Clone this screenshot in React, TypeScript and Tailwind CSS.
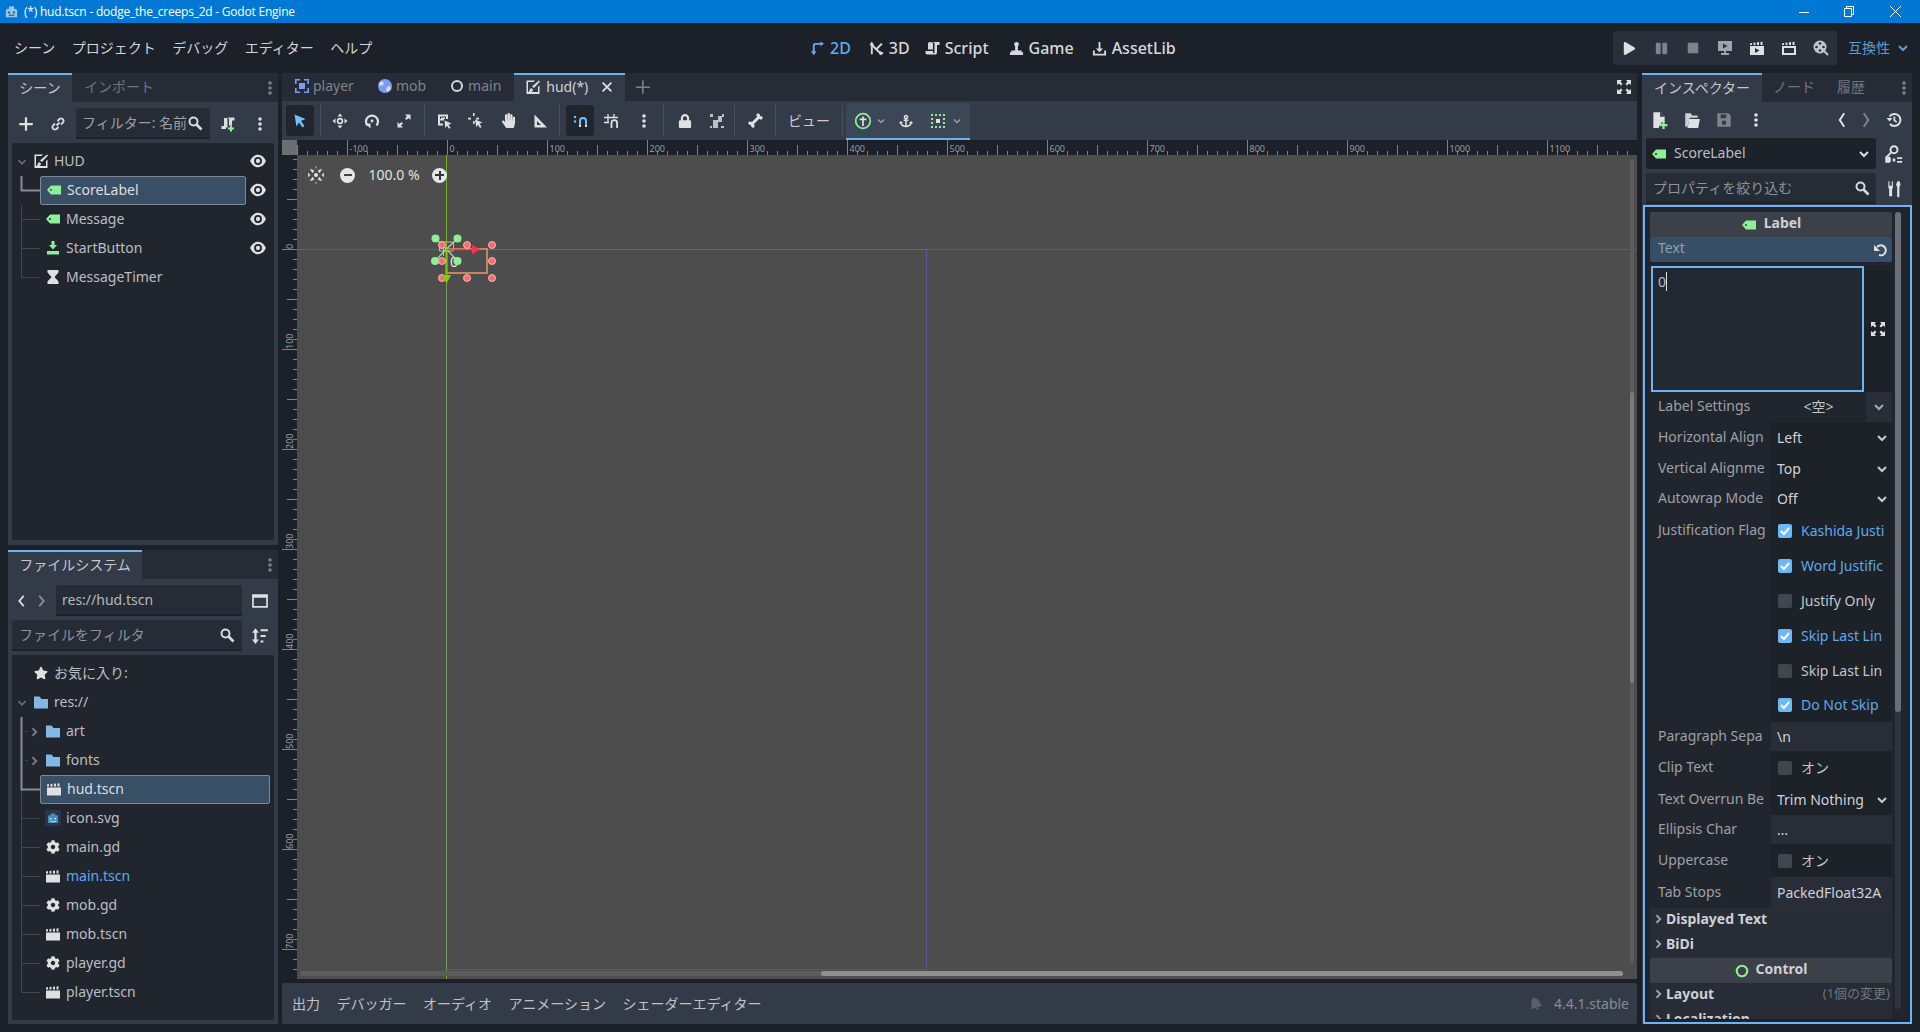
import type { ReactNode } from 'react'
import { FaAnchor, FaBell, FaBone, FaCog, FaHandPaper, FaLock, FaPause, FaPlay, FaStar, FaStop } from 'react-icons/fa'

const font = { fontFamily: '"Noto Sans", "Noto Sans CJK JP", sans-serif' }

const I = ({ children, size = 16, className = '' }: { children: ReactNode; size?: number; className?: string }) => (
  <svg width={size} height={size} viewBox="0 0 16 16" fill="currentColor" className={`shrink-0 ${className}`}>{children}</svg>
)

const Chevron = ({ className = '', size = 16 }: { className?: string; size?: number }) => (
  <I size={size} className={className}><path d="M4 6l4 4 4-4" fill="none" stroke="currentColor" strokeWidth="2" /></I>
)
const ChevronRight = ({ className = '' }: { className?: string }) => (
  <I size={12} className={className}><path d="M6 3l5 5-5 5" fill="none" stroke="currentColor" strokeWidth="2.4" /></I>
)
const Dots = ({ className = '' }: { className?: string }) => (
  <I className={className}><circle cx="8" cy="3" r="1.8" /><circle cx="8" cy="8" r="1.8" /><circle cx="8" cy="13" r="1.8" /></I>
)
const Search = ({ className = 'text-[#d8d9db]' }: { className?: string }) => (
  <I className={className}><circle cx="6.5" cy="6.5" r="4" fill="none" stroke="currentColor" strokeWidth="2" /><path d="M9.5 9.5l5 5" stroke="currentColor" strokeWidth="2.6" /></I>
)
const LabelIcon = () => (
  <I className="text-[#8eef97]"><path fillRule="evenodd" d="M1 8l4-4.500h10v9H5zM5 7a1 1 0 1 0 0 2 1 1 0 0 0 0-2z" /></I>
)
const Eye = () => (
  <I size={18} className="text-[#e0e0e0]"><path fillRule="evenodd" d="M8 2.500C4.500 2.500 2 5.500 1 8c1 2.500 3.500 5.500 7 5.500s6-3 7-5.500c-1-2.500-3.500-5.500-7-5.500zm0 2a3.500 3.500 0 1 1 0 7 3.500 3.500 0 0 1 0-7zm0 1.600a1.900 1.900 0 1 0 0 3.800 1.900 1.900 0 0 0 0-3.800z" /></I>
)
const ControlNode = () => (
  <I className="text-[#e0e0e0]"><path d="M2 1.500h8L8.500 3H3v10h10V8l1.500-1.500V15H1.500V1.500z" /><path d="M14 1.500l1 1-6 6.500-2-1.500zM6 9l2 1.500c0 2.500-2.500 3-4.500 2.500C5 12 4.500 10 6 9z" /></I>
)
const Clapper = () => (
  <I size={16} className="text-[#e0e0e0]"><path d="M1 6.500h14v8H1zM1 3.500l2-.500v2.500H1zM4.500 3l2-.300v2.800h-2zM8 2.700l2-.200v3H8zM11.500 2.500l2-.200v3.200h-2z" /></I>
)
const Folder = () => (
  <I size={16} className="text-[#84b7e3]"><path d="M1 2.500h5.500l2 2.500H15v9.500H1z" /></I>
)
const Gear = () => <FaCog size={14} className="mx-px shrink-0 text-[#e0e0e0]" />
const Scroll = () => (
  <I><path d="M6 2h8.500v3H12v7.500c0 1.500-1 2-2 2H2c-1 0-1.500-.800-1.500-2V11H8v1.500c0 .500.300.800.700.800s.800-.300.800-.800V3.500C9.500 2.800 9 2 6 2z" /><path d="M4.500 2C3.500 2 3 3 3 4v5.500h5V3.500C8 2.800 7 2 4.500 2z" /></I>
)
const ClapPlay = () => (
  <I><path fillRule="evenodd" d="M1 6h14v9H1zM6 8v5l4.500-2.500z" /><path d="M1 3.500l2-.500v2H1zM4.500 2.800l2-.300V5h-2zM8 2.300l2-.200V5H8zM11.500 2l2-.200V5h-2z" /></I>
)
const ClapOpen = () => (
  <I><path fillRule="evenodd" d="M1 6h14v9H1zM3 8v5h10V8z" /><path d="M1 3.500l2-.500v2H1zM4.500 2.800l2-.300V5h-2zM8 2.300l2-.200V5H8zM11.500 2l2-.200V5h-2z" /></I>
)

const Sep = () => <div className="mx-[3px] h-[31px] w-px bg-[#485061]" />

const ToolBtn = ({ children, active = false, w = 32 }: { children: ReactNode; active?: boolean; w?: number }) => (
  <div style={{ width: w }} className={`flex h-[31px] items-center justify-center rounded-[3px] text-[#dfe0e2] ${active ? 'bg-[#21262e]' : ''}`}>{children}</div>
)

const toolbarLeft = (
  <>
    <ToolBtn active w={28}>
      <I className="text-[#70bfff]"><path d="M2.500 1.500l11 4.500-4.500 2 3.500 5-2 1.500-3.500-5-2.500 4z" /></I>
    </ToolBtn>
    <div className="w-[3px]" /><Sep />
    <ToolBtn>
      <I><path d="M8 .500l2.500 3h-5zM8 15.500l-2.500-3h5zM.500 8l3-2.500v5zM15.500 8l-3 2.500v-5z" /><circle cx="8" cy="8" r="2.400" fill="none" stroke="currentColor" strokeWidth="1.600" /></I>
    </ToolBtn>
    <ToolBtn>
      <I><path d="M3.500 12.500A6 6 0 1 1 12.500 12.500" fill="none" stroke="currentColor" strokeWidth="2.200" /><path d="M1 10.500h5.500v5z" /><circle cx="8" cy="8" r="1.400" /></I>
    </ToolBtn>
    <ToolBtn>
      <I><path d="M9 1.500h5.500V7l-2-2-2 2L9 5.500l2-2zM7 14.500H1.500V9l2 2 2-2L7 10.500l-2 2z" /></I>
    </ToolBtn>
    <div className="w-[1px]" /><Sep />
    <ToolBtn>
      <I><path d="M2 1.500h10v4.500h-2V3.500H4V6h4v1.500H4v3h3V12.500H2zM5 4.500h4V6H5z" /><path d="M8.500 7.500l7 3-3 1.200 2 3-1.500 1-2-3-1.700 2.300z" /></I>
    </ToolBtn>
    <ToolBtn>
      <I><path d="M5 0h1.600v3H5zM5 8h1.600v3H5zM0 4.800h3v1.600H0zM8 4.800h3v1.600H8z" /><path d="M7 6.500l7.500 3-3 1.200 2 3.300-1.500 1-2-3.300-1.700 2.500z" /></I>
    </ToolBtn>
    <ToolBtn><FaHandPaper size={15} /></ToolBtn>
    <ToolBtn>
      <I><path fillRule="evenodd" d="M2.500 1.500L15 14.500H2.500zM5 8v4h4z" /></I>
    </ToolBtn>
    <Sep />
    <div className="w-[3px]" />
    <ToolBtn active w={28}>
      <I><path d="M8 14V8a3 3 0 0 1 6 0v6" fill="none" stroke="#70bfff" strokeWidth="2" /><path d="M7 12h2v2H7zM13 12h2v2h-2z" fill="#e0e0e0" /><circle cx="3" cy="4" r="1.200" fill="#70bfff" /><circle cx="3" cy="8.500" r="1.200" fill="#70bfff" /></I>
    </ToolBtn>
    <ToolBtn w={33}>
      <I><path d="M5 1v9M11 1v4M1 4.500h14M1 9.500h5" fill="none" stroke="currentColor" strokeWidth="1.300" /><path d="M8.500 15V10a2.800 2.800 0 0 1 5.600 0v5" fill="none" stroke="currentColor" strokeWidth="1.800" /></I>
    </ToolBtn>
    <ToolBtn w={33}><Dots /></ToolBtn>
    <Sep />
    <ToolBtn w={36}><FaLock size={14} /></ToolBtn>
    <ToolBtn w={28}>
      <I><path d="M1 1h3v3H1zM12 13h3v2h-3zM1 13h2v2H1zM13 1h2v3h-2zM4 7h5v8H4zM9 3h4v6H9z" opacity=".8" /></I>
    </ToolBtn>
    <Sep />
    <ToolBtn w={34}><FaBone size={15} className="-rotate-45" /></ToolBtn>
    <Sep />
    <div className="flex h-[31px] w-[60px] items-center justify-center text-sm text-[#c9cbcf]">ビュー</div>
    <Sep />
  </>
)

type TreeItem = { name: string; icon: ReactNode; eye?: boolean; selected?: boolean; level: number; open?: boolean; closed?: boolean; blue?: boolean }

const TreeRow = ({ item, boxRight }: { item: TreeItem; boxRight: boolean }) => {
  const text = item.blue ? 'text-[#5fa9e8]' : item.selected ? 'text-[#dcdee0]' : 'text-[#bcbec2]'
  return (
    <div className="flex h-[29px] items-center">
      {item.level === 0 ? (
        <div className="flex w-[21px] justify-end pr-[4px]">{item.open && <Chevron size={14} className="text-[#6c7078]" />}</div>
      ) : (
        <div className="flex w-[28px] justify-end">{item.closed && <ChevronRight className="text-[#7a7e85]" />}</div>
      )}
      <div className={`flex h-[29px] flex-1 items-center rounded-[2px] pb-[2px] ${item.level === 1 ? 'pl-[5px]' : ''} ${item.selected ? 'border border-[#7d8894] bg-[#384f66] pl-[4px]' : ''}`}>
        <div className="mr-[5px] flex w-[16px] justify-center">{item.icon}</div>
        <span className={`text-sm ${text}`}>{item.name}</span>
      </div>
      {boxRight && <div className="flex w-[28px] justify-start pb-[2px] pl-[3px]">{item.eye && <Eye />}</div>}
      {!boxRight && <div className="w-[4px]" />}
    </div>
  )
}

const sceneItems: TreeItem[] = [
  { name: 'HUD', level: 0, open: true, icon: <ControlNode />, eye: true },
  { name: 'ScoreLabel', level: 1, selected: true, icon: <LabelIcon />, eye: true },
  { name: 'Message', level: 1, icon: <LabelIcon />, eye: true },
  { name: 'StartButton', level: 1, eye: true, icon: <I className="text-[#8eef97]"><path d="M6.500 1h3v4H12L8 9.500 4 5h2.500zM2 11h12v3.500H2z" /></I> },
  { name: 'MessageTimer', level: 1, icon: <I className="text-[#e0e0e0]"><path d="M2.500 1h11v2.500L9.500 8l4 4.500V15h-11v-2.500l4-4.500-4-4.500z" /></I> },
]

const fileItems: TreeItem[] = [
  { name: 'お気に入り:', level: 0, icon: <FaStar size={14} className="text-[#e0e0e0]" /> },
  { name: 'res://', level: 0, open: true, icon: <Folder /> },
  { name: 'art', level: 1, closed: true, icon: <Folder /> },
  { name: 'fonts', level: 1, closed: true, icon: <Folder /> },
  { name: 'hud.tscn', level: 1, selected: true, icon: <Clapper /> },
  { name: 'icon.svg', level: 1, icon: (
    <I className="text-[#478cbf]"><rect width="16" height="16" rx="1.500" fill="#2c3448" /><path d="M3 6l1.500-1 1 .500L6 3.500h4l.500 2 1-.500L13 6v7H3z" /><path d="M5 8h1.500v1.500H5zM9.500 8H11v1.500H9.500zM5 11h6v.800H5z" fill="#e0e0e0" /></I>
  ) },
  { name: 'main.gd', level: 1, icon: <Gear /> },
  { name: 'main.tscn', level: 1, blue: true, icon: <Clapper /> },
  { name: 'mob.gd', level: 1, icon: <Gear /> },
  { name: 'mob.tscn', level: 1, icon: <Clapper /> },
  { name: 'player.gd', level: 1, icon: <Gear /> },
  { name: 'player.tscn', level: 1, icon: <Clapper /> },
]

const DockTabs = ({ active, others, w }: { active: string; others: { t: string; ml: number }[]; w: number }) => (
  <div className="flex h-[29px] items-stretch bg-[#262c36]">
    <div style={{ width: w }} className="flex items-center justify-center border-t-2 border-[#6cb2ef] bg-[#343b48] pb-[2px] text-sm text-[#c4c6ca]">{active}</div>
    {others.map(o => <span key={o.t} style={{ marginLeft: o.ml }} className="self-center pb-[2px] text-sm text-[#6f7580]">{o.t}</span>)}
    <div className="flex-1" />
    <div className="flex w-[16px] items-center justify-center"><Dots className="text-[#7b808a]" /></div>
  </div>
)

const Input = ({ children, className = '' }: { children: ReactNode; className?: string }) => (
  <div className={`flex h-[31px] items-center rounded-t-[3px] border-b-2 border-[#1d2129] bg-[#262c36] ${className}`}>{children}</div>
)

const SceneDock = () => (
  <div className="flex h-[472px] flex-col bg-[#343b48]">
    <DockTabs active="シーン" w={64} others={[{ t: 'インポート', ml: 12 }]} />
    <div className="flex h-[31px] mt-[6px] items-center">
      <div className="flex w-[36px] justify-center text-[#e0e0e0]"><I size={18}><path d="M7 2h2v5h5v2H9v5H7V9H2V7h5z" /></I></div>
      <div className="flex w-[32px] justify-center pr-[4px] text-[#dcdcdc]">
        <I><path d="M6.500 9.500l3-3M5 7.500L3 9.500a2.500 2.500 0 0 0 3.500 3.500l2-2M11 8.500l2-2A2.500 2.500 0 0 0 9.500 3l-2 2" fill="none" stroke="currentColor" strokeWidth="1.800" /></I>
      </div>
      <Input className="w-[134px] overflow-hidden pl-[6px]">
        <span className="w-[105px] shrink-0 overflow-hidden whitespace-nowrap text-sm text-[#9b9fa6]">フィルター: 名前</span>
        <Search />
      </Input>
      <div className="flex w-[36px] justify-center text-[#dcdcdc]"><I><path d="M6 1.500h8.500v3H12v5H9V3C9 2 8 1.500 6 1.500z" /><path d="M4 2h3.500v9.500H6V13h-4.500V10H4z" /><path d="M10 9.500h2v2h2v2h-2v2h-2v-2H8v-2h2z" fill="#8eef97" /></I></div>
      <div className="flex w-[28px] justify-center text-[#dcdcdc]"><Dots /></div>
    </div>
    <div className="relative mx-[4px] mb-[5px] mt-[4px] flex-1 rounded-[2px] bg-[#21262e] pt-[4px]">
      <svg className="absolute left-0 top-0" width="40" height="140" fill="none">
        <path d="M9.500 62V134.500H28M9.500 105.500H28M9.500 76.500H28" stroke="#41464f" />
        <path d="M9.500 33V47.500H28" stroke="#8a8c90" strokeWidth="2" />
      </svg>
      <div className="relative">{sceneItems.map(i => <TreeRow key={i.name} item={i} boxRight />)}</div>
    </div>
  </div>
)

const FileDock = () => (
  <div className="flex h-[474px] flex-col bg-[#343b48]">
    <DockTabs active="ファイルシステム" w={134} others={[]} />
    <div className="mt-[6px] flex h-[31px] items-center">
      <div className="flex w-[48px] items-center justify-between pl-[10px] pr-[11px]">
        <span className="h-[14px] w-[8px] text-[#dcdcdc]"><I size={14} className="-ml-[3px]"><path d="M10 2L5 8l5 6" fill="none" stroke="currentColor" strokeWidth="2.200" /></I></span>
        <span className="h-[14px] w-[8px] text-[#8a8f98]"><I size={14} className="-ml-[3px]"><path d="M6 2l5 6-5 6" fill="none" stroke="currentColor" strokeWidth="2.200" /></I></span>
      </div>
      <Input className="w-[186px] pl-[6px]"><span className="text-sm text-[#b4b7bb]">res://hud.tscn</span></Input>
      <div className="flex w-[36px] justify-center text-[#e0e0e0]"><I size={18}><path fillRule="evenodd" d="M1 2h14v12H1zM2.500 5v7.500h11V5z" /></I></div>
    </div>
    <div className="mt-[4px] flex h-[31px] items-center pl-[4px]">
      <Input className="w-[230px] justify-between pl-[7px] pr-[7px]">
        <span className="text-sm text-[#8d9198]">ファイルをフィルタ</span>
        <Search />
      </Input>
      <div className="flex w-[36px] justify-center text-[#e0e0e0]"><I size={18}><path d="M4 1l3 4H5v6h2l-3 4-3-4h2V5H1zM8.500 2H15v1.800H8.500zM8.500 7H13v1.800H8.500zM8.500 12H11v1.800H8.500z" /></I></div>
    </div>
    <div className="relative mx-[4px] mb-[4px] mt-[4px] h-[365px] rounded-[2px] bg-[#21262e] pt-[4px]">
      <svg className="absolute left-0 top-0" width="40" height="340" fill="none">
        <path d="M9.500 135V337.500H28M9.500 163.500H28M9.500 192.500H28M9.500 221.500H28M9.500 250.500H28M9.500 279.500H28M9.500 308.500H28" stroke="#41464f" />
        <path d="M13 76.500H16M13 105.500H16" stroke="#41464f" />
        <path d="M9.500 62V134.500H28" stroke="#8a8c90" strokeWidth="2" />
      </svg>
      <div className="relative">{fileItems.map(i => <TreeRow key={i.name} item={i} boxRight={false} />)}</div>
    </div>
  </div>
)

const SceneTab = ({ name, icon, ml }: { name: string; icon: ReactNode; ml: number }) => (
  <div style={{ marginLeft: ml }} className="flex items-center gap-[3px] pb-[2px] text-sm text-[#7e838c]">{icon}<span>{name}</span></div>
)

const hMajors = [-100, 0, 100, 200, 300, 400, 500, 600, 700, 800, 900, 1000, 1100]
const hTicks = Array.from({ length: 135 }, (_, i) => i)
const vTicks = Array.from({ length: 83 }, (_, i) => i)

const HRuler = () => (
  <svg width="1340" height="15" className="block bg-[#1c2028]">
    {hTicks.map(i => {
      const x = 0.5 + i * 10 - 0
      const v = i * 10 - 150
      const h = v % 100 === 0 ? 15 : v % 50 === 0 ? 10 : 4
      return <line key={i} x1={x} x2={x} y1={15 - h} y2={15} stroke="#7e8187" />
    })}
    {hMajors.map(v => (
      <text key={v} x={v + 150 + 2.5} y={12} fontSize="9" fill="#9a9da2" style={font}>{v}</text>
    ))}
  </svg>
)

const VRuler = () => (
  <svg width="15" height="824" className="block bg-[#1c2028]">
    {vTicks.map(i => {
      const y = 4.5 + i * 10
      const v = i * 10 - 90
      const w = v % 100 === 0 ? 15 : v % 50 === 0 ? 10 : 4
      return <line key={i} x1={15 - w} x2={15} y1={y} y2={y} stroke="#7e8187" />
    })}
    {[0, 100, 200, 300, 400, 500, 600, 700].map(v => (
      <text key={v} transform={`translate(11 ${94 + v}) rotate(-90)`} fontSize="9" fill="#9a9da2" style={font}>{v}</text>
    ))}
  </svg>
)

const Gizmo = () => (
  <svg width="1340" height="824" className="absolute left-0 top-0">
    <g transform="translate(149.500 94)">
      <line x1="-150" x2="0" y1="0.500" y2="0.500" stroke="#a8404f" />
      <line x1="0" x2="480" y1="0.500" y2="0.500" stroke="#8d4b93" />
      <line x1="480" x2="1200" y1="0.500" y2="0.500" stroke="#a8404f" />
      <line x1="0" x2="0" y1="-94" y2="0" stroke="#74b01f" />
      <line x1="0" x2="0" y1="0" y2="720" stroke="#7a9a68" />
      <line x1="0" x2="0" y1="720" y2="730" stroke="#74b01f" />
      <line x1="480" x2="480" y1="0" y2="720" stroke="#5a5a96" />
      <line x1="0" x2="480" y1="720.500" y2="720.500" stroke="#5a4fa6" />
      <rect x="0" y="0" width="40.500" height="24" fill="none" stroke="#c58658" strokeWidth="2" />
      <text x="3.500" y="17.500" fontSize="14" fill="#e8e8e8" style={font}>0</text>
      <path d="M-7 -7h14v9h-14zM-3 -7v14" fill="none" stroke="#e8a0a8" strokeWidth="1" />
      {[[-11, -10.500], [11, -10.500], [-11.500, 12], [11, 12]].map(([x, y], i) => (
        <g key={i}>
          <line x1="0" y1="0" x2={x} y2={y} stroke="#8eef97" strokeWidth="1.300" />
          <circle cx={x} cy={y} r="4" fill="#8eef97" />
        </g>
      ))}
      <line x1="0" x2="0" y1="0" y2="27" stroke="#80c800" strokeWidth="1.500" />
      <line x1="0" x2="27" y1="0.500" y2="0.500" stroke="#ff3a58" strokeWidth="1.500" />
      {[[-4.500, -4], [20.500, -4], [45.500, -4], [-4.500, 12], [45.500, 12], [-4.500, 29], [20.500, 29], [45.500, 29]].map(([x, y], i) => (
        <circle key={i} cx={x} cy={y} r="3.500" fill="#ff6b6b" stroke="#f0d0d0" strokeWidth="0.800" />
      ))}
      <path d="M25.500 -4V5L34 0.500z" fill="#ff3050" />
      <path d="M-4.500 26H4.500L0 34.500z" fill="#7ed100" />
    </g>
  </svg>
)

const Viewport = () => (
  <div className="flex h-[839px] flex-col">
    <div className="flex h-[15px]">
      <div className="h-[15px] w-[15px] bg-[#6d6e70]" />
      <HRuler />
    </div>
    <div className="flex h-[824px]">
      <VRuler />
      <div className="relative w-[1340px] overflow-hidden bg-[#4d4d4d]">
        <Gizmo />
        <div className="absolute left-[10px] top-[10px] flex h-[20px] items-center text-[#e6e6e6]">
          <I size={18}><path d="M3 3l3 1-1 2zM13 3l-3 1 1 2zM3 13l3-1-1-2zM13 13l-3-1 1-2zM8 0v2M8 14v2" stroke="currentColor" fill="currentColor" strokeWidth=".600" /><circle cx="8" cy="8" r="1.800" /><path d="M1 6l2 2-2 2zM15 6l-2 2 2 2z" /></I>
          <div className="ml-[15px] flex h-[15px] w-[15px] items-center justify-center rounded-full bg-[#e6e6e6]"><div className="h-[2px] w-[8px] bg-[#444]" /></div>
          <span className="ml-[10px] w-[58px] text-center text-sm text-[#e2e2e2]">100.0 %</span>
          <div className="relative ml-[9px] flex h-[15px] w-[15px] items-center justify-center rounded-full bg-[#e6e6e6]"><div className="h-[2px] w-[9px] bg-[#333]" /><div className="absolute h-[9px] w-[2px] bg-[#333]" /></div>
        </div>
        <div className="absolute bottom-[3px] left-[3px] h-[5px] w-[1323px] rounded-full bg-[#5c5c5c]" />
        <div className="absolute bottom-[3px] left-[524px] h-[5px] w-[802px] rounded-full bg-[#8f8f8f]" />
        <div className="absolute right-[3px] top-[4px] h-[804px] w-[4px] rounded-full bg-[#5c5c5c]" />
        <div className="absolute right-[3px] top-[237px] h-[291px] w-[4px] rounded-full bg-[#7a7a7a]" />
      </div>
    </div>
  </div>
)

const CenterColumn = () => (
  <div className="flex w-[1355px] flex-col">
    <div className="flex h-[28px] items-stretch bg-[#262c36]">
      <SceneTab name="player" ml={12} icon={<I className="text-[#7c9cf0]"><path d="M1 1h5v1.600H2.600V6H1zM10 1h5v5h-1.600V2.600H10zM1 10h1.600v3.400H6V15H1zM13.400 10H15v5h-5v-1.600h3.400zM5 5h6v6H5z" /></I>} />
      <SceneTab name="mob" ml={23} icon={<I className="text-[#7c9cf0]"><circle cx="8" cy="8" r="7" /><path d="M4 3l3 2-1 2-3 1-1-2zM10 9l3-1 1 3-3 3-2-2z" fill="#d9dce6" /></I>} />
      <SceneTab name="main" ml={23} icon={<I className="text-[#d4d5d7]"><circle cx="8" cy="8" r="5" fill="none" stroke="currentColor" strokeWidth="2" /></I>} />
      <div className="ml-[13px] flex w-[111px] items-center border-t-2 border-[#6cb2ef] bg-[#343b48] pb-[2px] pl-[11px] text-sm text-[#cfd1d4]">
        <ControlNode />
        <span className="ml-[5px]">hud(*)</span>
        <I size={14} className="ml-[12px] text-[#e0e0e0]"><path d="M3 3l10 10M13 3L3 13" stroke="currentColor" strokeWidth="2" /></I>
      </div>
      <div className="ml-[8px] flex items-center text-[#7c828c]"><I size={18}><path d="M8 2h1.400v5.500H15v1.400H9.400V14H8V8.900H2.500V7.500H8z" /></I></div>
      <div className="flex-1" />
      <div className="flex w-[21px] items-center text-[#e0e0e0]"><I><path d="M1 1h5L4.500 2.800 6.500 5 5 6.500 2.800 4.500 1 6zM15 1v5l-1.800-1.500L11 6.500 9.500 5l2-2.200L10 1zM1 15v-5l1.800 1.500L5 9.500 6.500 11l-2 2.200L6 15zM15 15h-5l1.500-1.800L9.500 11 11 9.500l2.200 2L15 10z" /></I></div>
    </div>
    <div className="flex h-[39px] items-center bg-[#343b48] pl-[4px]">
      {toolbarLeft}
      <div className="flex h-[37px] w-[124px] items-center self-end border-b-2 border-[#6cb2ef] bg-[#3b4757] pl-[8px] text-[#dfe0e2]">
        <I size={18} className="text-[#8eef97]"><circle cx="8" cy="8" r="6.500" fill="none" stroke="currentColor" strokeWidth="1.500" /><path d="M5 6.500h6M8 4v8.500" stroke="#e0e0e0" strokeWidth="1.500" /></I>
        <Chevron size={12} className="ml-[3px] text-[#9a9ea5]" />
        <FaAnchor size={14} className="ml-[12px]" />
        <I size={16} className="ml-[17px] text-[#8eef97]"><path d="M1 1h2v2H1zM5 1h2v2H5zM9 1h2v2H9zM13 1h2v2h-2zM1 5h2v2H1zM13 5h2v2h-2zM1 9h2v2H1zM13 9h2v2h-2zM1 13h2v2H1zM5 13h2v2H5zM9 13h2v2H9zM13 13h2v2h-2z" /><path d="M6 6h4v4H6z" fill="#e0e0e0" /></I>
        <Chevron size={12} className="ml-[5px] text-[#9a9ea5]" />
      </div>
    </div>
    <Viewport />
    <div className="mt-[4px] flex h-[41px] items-center rounded-[2px] bg-[#343b48] pl-[10px] pr-[8px] text-sm text-[#c0c2c6]">
      <span>出力</span>
      <span className="ml-[16.500px]">デバッガー</span>
      <span className="ml-[16.500px]">オーディオ</span>
      <span className="ml-[16.500px]">アニメーション</span>
      <span className="ml-[16.500px]">シェーダーエディター</span>
      <div className="flex-1" />
      <FaBell size={13} className="-rotate-[20deg] text-[#5a606b]" />
      <span className="ml-[12px] text-[#878b92]">4.4.1.stable</span>
    </div>
  </div>
)

const InspLabel = ({ children }: { children: ReactNode }) => (
  <div className="w-[121px] overflow-hidden whitespace-nowrap pb-[2px] pl-[8px] text-sm text-[#9da0a6]">{children}</div>
)

const SelectRow = ({ label, value, h = 31 }: { label: string; value: string; h?: number }) => (
  <div style={{ height: h }} className="flex shrink-0 items-center">
    <InspLabel>{label}</InspLabel>
    <div className="flex h-full w-[121px] items-center justify-between bg-[#1d2128] pl-[6px] pr-[2px] text-sm text-[#d0d2d5]">{value}<Chevron className="text-[#c9cbcf]" /></div>
  </div>
)

const TextRow = ({ label, value, h, dark = false }: { label: string; value: string; h: number; dark?: boolean }) => (
  <div style={{ height: h }} className="flex shrink-0 items-center">
    <InspLabel>{label}</InspLabel>
    <div className={`flex h-full w-[121px] items-center overflow-hidden whitespace-nowrap pl-[6px] text-sm text-[#d0d2d5] ${dark ? 'bg-[#21262e]' : 'bg-[#282d37]'}`}>{value}</div>
  </div>
)

const Box = ({ on }: { on: boolean }) => (
  <div className={`flex h-[14px] w-[14px] shrink-0 items-center justify-center rounded-[2px] ${on ? 'bg-[#6cb8f8]' : 'bg-[#41454f]'}`}>
    {on && <I size={12} className="text-white"><path d="M2.500 8l4 4 7-8" fill="none" stroke="currentColor" strokeWidth="2.600" /></I>}
  </div>
)

const CheckRow = ({ label, on, text, h }: { label?: string; on: boolean; text: string; h: number }) => (
  <div style={{ height: h }} className="flex shrink-0 items-center">
    <InspLabel>{label ?? ''}</InspLabel>
    <div className="flex h-full w-[121px] items-center gap-[9px] overflow-hidden whitespace-nowrap bg-[#1d2128] pl-[7px]">
      <Box on={on} />
      <span className={`text-sm ${on ? 'text-[#5fa9e8]' : 'text-[#c4c6ca]'}`}>{text}</span>
    </div>
  </div>
)

const SectionRow = ({ name, note }: { name: string; note?: string }) => (
  <div className="flex h-[25px] shrink-0 items-center bg-[#272c36] pb-[3px] pl-[2px] pr-[2px]">
    <ChevronRight className="text-[#a2a5aa]" />
    <span className="ml-[2px] text-sm font-bold text-[#cfd1d4]">{name}</span>
    {note && <span className="ml-auto text-[13px] text-[#6f747d]">{note}</span>}
  </div>
)

const Category = ({ name, icon }: { name: string; icon: ReactNode }) => (
  <div className="flex h-[25px] shrink-0 items-center justify-center gap-[7px] rounded-[2px] bg-[#3c4049] pb-[3px] text-sm font-bold text-[#cfd1d4]">{icon}<span>{name}</span></div>
)

const Inspector = () => (
  <div className="flex w-[270px] flex-col bg-[#343b48]">
    <DockTabs active="インスペクター" w={120} others={[{ t: 'ノード', ml: 11 }, { t: '履歴', ml: 22 }]} />
    <div className="flex h-[36px] items-center text-[#dfe0e2]">
      <div className="flex w-[34px] justify-center"><I size={18}><path d="M3 1h6l4 4v5h-3v3H8v2H3z" /><path d="M9 1v4h4z" fill="#343b48" /><path d="M11 9h2v2.500h2.500v2H13V16h-2v-2.500H8.500v-2H11z" fill="#8eef97" /></I></div>
      <div className="flex w-[32px] justify-center"><I size={18}><path d="M2 2h5l1 2h5v2H6L4 14H2z" opacity=".9" /><path d="M5.500 7H15l-1.500 8H4z" /></I></div>
      <div className="flex w-[32px] justify-center text-[#7d828b]"><I size={18}><path fillRule="evenodd" d="M2 2h10l2 2v10H2zM5 3v3.500h5V3zM8 8.500a2 2 0 1 0 0 4 2 2 0 0 0 0-4z" /></I></div>
      <div className="flex w-[32px] justify-center"><Dots /></div>
      <div className="flex-1" />
      <div className="flex w-[24px] justify-center"><I size={18}><path d="M10 2L6 8l4 6" fill="none" stroke="currentColor" strokeWidth="1.800" /></I></div>
      <div className="flex w-[24px] justify-center text-[#7d828b]"><I size={18}><path d="M6 2l4 6-4 6" fill="none" stroke="currentColor" strokeWidth="1.800" /></I></div>
      <div className="flex w-[34px] justify-center pr-[2px]"><I><path d="M3.500 4.500A6 6 0 1 1 4 12" fill="none" stroke="currentColor" strokeWidth="2" /><path d="M.500 6h6l-3 3.500zM7.500 4.500h1.700V8l2 1.500-1 1.300L7.500 8.800z" /></I></div>
    </div>
    <div className="flex items-center pl-[4px]">
      <div className="flex h-[31px] w-[230px] items-center rounded-[3px] bg-[#1d2129] pl-[5px] pr-[4px] text-sm text-[#bcbec2]">
        <LabelIcon />
        <span className="ml-[7px] pb-[2px]">ScoreLabel</span>
        <Chevron className="ml-auto text-[#dcdcdc]" />
      </div>
      <div className="flex w-[36px] justify-center text-[#dfe0e2]"><I size={20}><circle cx="8" cy="4.500" r="2.800" fill="none" stroke="currentColor" strokeWidth="1.600" /><path d="M6 6.500L2 10.500" stroke="currentColor" strokeWidth="1.600" /><path d="M1 10h3c1 0 1.500 1 1.500 2.500S5 15 4 15H1zM7 11.500h2v2.500H7zM10.500 10.500h4v1.500h-4zM10.500 13.500h4V15h-4z" /></I></div>
    </div>
    <div className="mt-[4px] flex items-center pl-[4px]">
      <Input className="w-[230px] justify-between pl-[7px] pr-[6px]">
        <span className="text-sm text-[#8d9198]">プロパティを絞り込む</span>
        <Search />
      </Input>
      <div className="flex w-[36px] justify-center text-[#dfe0e2]"><I size={18}><path d="M3 1h1v4H3zM6 1h1v4H6zM3 5h4v2l-.700 1v6.500H3.700V8L3 7zM11 1h2l.800 3.500-1 1.500v8.500a1 1 0 0 1-2 0V6l-1-1.500z" /></I></div>
    </div>
    <div className="ml-px mt-[1px] h-[819px] w-[269px] overflow-hidden border-2 border-[#6cb4f5] bg-[#1d2129] pl-px pr-[2px] pt-[1px]">
      <div className="flex h-[811px] overflow-hidden rounded-[2px] bg-[#21262e] pl-[4px] pt-[4px]">
        <div className="flex h-[840px] w-[242px] shrink-0 flex-col">
          <Category name="Label" icon={<span className="pt-[3px]"><LabelIcon /></span>} />
          <div className="flex h-[25px] shrink-0 items-center justify-between rounded-[2px] bg-[#364e66] pb-[3px] pl-[8px] pr-[3px] text-sm text-[#90a0b0]">
            Text
            <I className="mt-[3px] text-[#e0e0e0]"><path d="M4 5A5 5 0 1 1 6 13" fill="none" stroke="currentColor" strokeWidth="2" /><path d="M1 3v6h6z" /></I>
          </div>
          <div className="mt-[4px] flex h-[126px] shrink-0">
            <div className="ml-px w-[213px] border-2 border-[#6cb4f5] bg-[#222831] pl-[5px] pt-[4px] text-sm text-[#bcbec2]">
              <span className="border-r border-[#e0e0e0]">0</span>
            </div>
            <div className="flex w-[28px] items-center justify-center bg-[#1d2128] text-[#e0e0e0]">
              <I><path d="M1 1h5L4.500 2.800 6.500 5 5 6.500 2.800 4.500 1 6zM15 1v5l-1.800-1.500L11 6.500 9.500 5l2-2.200L10 1zM1 15v-5l1.800 1.500L5 9.500 6.500 11l-2 2.200L6 15zM15 15h-5l1.500-1.800L9.500 11 11 9.500l2.200 2L15 10z" /></I>
            </div>
          </div>
          <div className="flex h-[30px] shrink-0 items-center">
            <InspLabel>Label Settings</InspLabel>
            <div className="flex h-full w-[95px] items-center justify-center text-sm text-[#c4c6ca]">&lt;空&gt;</div>
            <div className="flex h-full w-[26px] items-center justify-center bg-[#282d37] text-[#a8abb0]"><Chevron /></div>
          </div>
          <SelectRow label="Horizontal Align" value="Left" />
          <SelectRow label="Vertical Alignme" value="Top" />
          <SelectRow label="Autowrap Mode" value="Off" h={29} />
          <CheckRow label="Justification Flag" on text="Kashida Justi" h={35} />
          <CheckRow on text="Word Justific" h={35} />
          <CheckRow on={false} text="Justify Only" h={35} />
          <CheckRow on text="Skip Last Lin" h={35} />
          <CheckRow on={false} text="Skip Last Lin" h={35} />
          <CheckRow on text="Do Not Skip" h={34} />
          <TextRow label="Paragraph Sepa" value="\n" h={29} />
          <CheckRow label="Clip Text" on={false} text="オン" h={33} />
          <SelectRow label="Text Overrun Be" value="Trim Nothing" />
          <TextRow label="Ellipsis Char" value="…" h={29} />
          <CheckRow label="Uppercase" on={false} text="オン" h={33} />
          <TextRow label="Tab Stops" value="PackedFloat32A" h={31} />
          <SectionRow name="Displayed Text" />
          <SectionRow name="BiDi" />
          <Category name="Control" icon={<span className="pt-[3px] text-[#8eef97]"><I size={14}><circle cx="8" cy="8" r="6" fill="none" stroke="currentColor" strokeWidth="2.400" /></I></span>} />
          <SectionRow name="Layout" note="(1個の変更)" />
          <SectionRow name="Localization" />
        </div>
        <div className="relative ml-[3px] h-[797px] w-[6px] shrink-0 rounded-full bg-[#2f343e]">
          <div className="h-[500px] w-[6px] rounded-full bg-[#6c6f76]" />
        </div>
      </div>
    </div>
  </div>
)

export default function App() {
  return (
    <div style={font} className="flex h-[1032px] w-[1920px] flex-col overflow-hidden bg-[#1c2028]">
      <div className="flex h-[23px] items-center bg-[#0078d4] pl-[4px] text-white" style={{ fontFamily: '"Open Sans", sans-serif' }}>
        <I size={15} className="text-[#9cc4e4]"><path d="M2 6l2-1 1 .500L5.500 2.500h5L11 5.500l1-.500 2 1v8H2z" /><path d="M4.500 8h2v2h-2zM9.500 8h2v2h-2zM5 11.500h6v1H5z" fill="#0a5a9a" /></I>
        <span className="ml-[5px] text-xs tracking-[-0.22px]">(*) hud.tscn - dodge_the_creeps_2d - Godot Engine</span>
        <div className="flex-1" />
        <svg width="130" height="23" fill="none" stroke="white" className="mr-[5px]">
          <path d="M14 12.500H24" />
          <path d="M59.500 8.500h7v8h-7zM61.500 8.500v-2h7v8h-2" />
          <path d="M105 6l11 11M116 6l-11 11" />
        </svg>
      </div>
      <div className="flex h-[50px] items-center pl-[14px] pr-[9px] text-sm text-[#d2d4d7]">
        <div className="flex w-[796px] gap-[16.500px]">
          <span>シーン</span><span>プロジェクト</span><span>デバッグ</span><span>エディター</span><span>ヘルプ</span>
        </div>
        <div className="flex items-center gap-[18px] text-base font-medium text-[#d6d8db]">
          <div className="flex items-center gap-[5px] text-[#62aeef]"><I size={15}><path d="M4 14V5a2 2 0 0 1 2-2h5" fill="none" stroke="currentColor" strokeWidth="2" /><path d="M11 .500l4 2.500-4 2.500zM1 11h6l-3 4z" /></I>2D</div>
          <div className="flex items-center gap-[5px]"><I size={15}><path d="M3 14V4l9 9h3M3 3" fill="none" stroke="currentColor" strokeWidth="2" /><path d="M3 .500l2.500 4h-5zM15.500 13l-4 2.500v-5zM6 9L13 2l1.500 1.500L8 10z" /></I>3D</div>
          <div className="-ml-[3px] flex items-center gap-[4px]"><Scroll />Script</div>
          <div className="ml-[2px] flex items-center gap-[5px]"><I size={15}><circle cx="8" cy="3.500" r="2.500" /><path d="M6.500 5h3v5h-3zM2.500 10h11v2h1.500v3H1v-3h1.500z" /></I>Game</div>
          <div className="flex items-center gap-[5px]"><I size={15}><path d="M7 1h2v7h3l-4 4-4-4h3zM1 10h2v3.500h10V10h2v5.500H1z" /></I>AssetLib</div>
        </div>
        <div className="flex-1" />
        <div className="flex h-[34px] w-[224px] items-center justify-between rounded-[3px] bg-[#2a303b] px-[8px] text-[#dfe0e2]">
          <div className="flex w-[16px] justify-center"><FaPlay size={13} /></div>
          <div className="flex w-[16px] justify-center text-[#7d828b]"><FaPause size={13} /></div>
          <div className="flex w-[16px] justify-center text-[#7d828b]"><FaStop size={12} /></div>
          <div className="flex w-[16px] justify-center text-[#a0a4aa]"><I><path fillRule="evenodd" d="M1 1h14v10H9v2h3v2H4v-2h3v-2H1zM6 3.500v5l4.500-2.500z" /></I></div>
          <div className="flex w-[16px] justify-center"><ClapPlay /></div>
          <div className="flex w-[16px] justify-center"><ClapOpen /></div>
          <div className="flex w-[16px] justify-center text-[#c4c6ca]"><I><circle cx="7" cy="7" r="6.500" /><circle cx="7" cy="3.500" r="1.300" fill="#2a303b" /><circle cx="3.500" cy="7" r="1.300" fill="#2a303b" /><circle cx="10.500" cy="7" r="1.300" fill="#2a303b" /><circle cx="7" cy="10.500" r="1.300" fill="#2a303b" /><path d="M11 11l4 4" stroke="currentColor" strokeWidth="2" /></I></div>
        </div>
        <span className="ml-[11px] text-sm text-[#5d9ccf]">互換性</span>
        <Chevron className="ml-[5px] text-[#5d9ccf]" />
      </div>
      <div className="flex h-[951px] pl-[8px]">
        <div className="flex w-[270px] flex-col gap-[5px]">
          <SceneDock />
          <FileDock />
        </div>
        <div className="w-[4px]" />
        <CenterColumn />
        <div className="w-[5px]" />
        <Inspector />
      </div>
    </div>
  )
}
